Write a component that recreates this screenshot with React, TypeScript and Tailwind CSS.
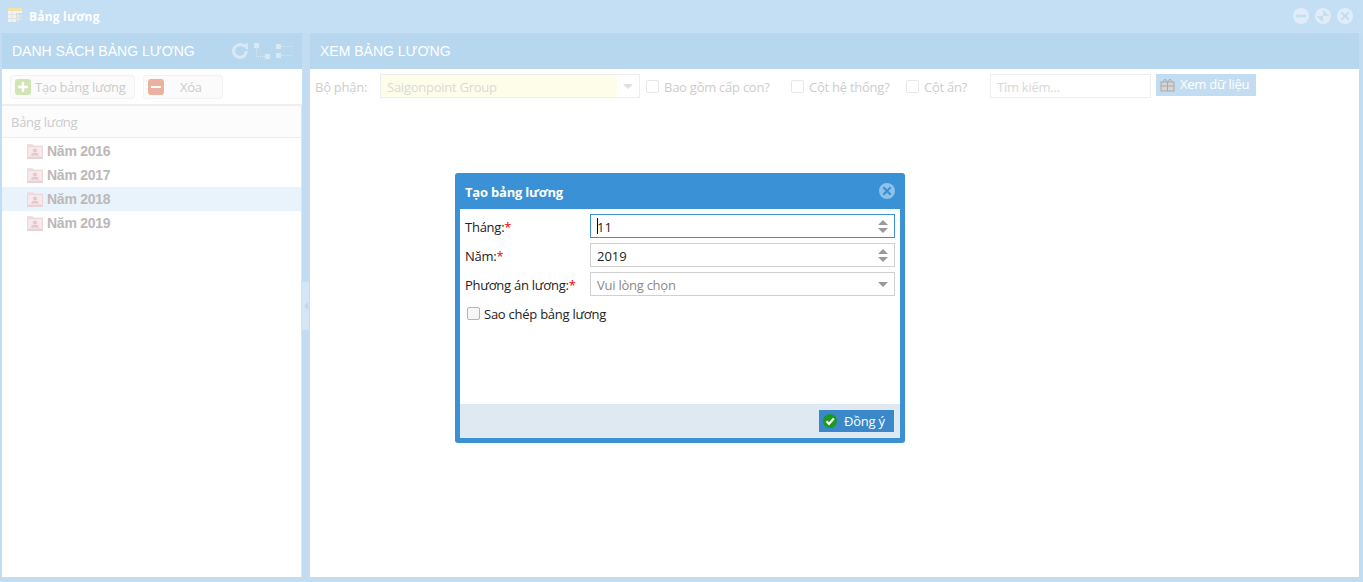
import React from "react";

const Tri = ({ up = false, color = "#9a9a9a" }: { up?: boolean; color?: string }) => (
  <svg width="10" height="5" viewBox="0 0 10 5" className="block">
    <polygon points={up ? "5,0 10,5 0,5" : "0,0 10,0 5,5"} fill={color} />
  </svg>
);

const Check = ({ className = "" }: { className?: string }) => (
  <span className={`block w-[13px] h-[13px] rounded-[2px] border border-[#e8e8e8] bg-white ${className}`} />
);

const FolderIcon = () => (
  <svg width="16" height="15" viewBox="0 0 16 15" className="shrink-0">
    <path d="M0 3 L0 1 Q0 0 1 0 L5.5 0 L7 1.5 L15 1.5 Q16 1.5 16 2.5 L16 3 Z" fill="#efdfe2" />
    <rect x="0" y="2.5" width="16" height="11" fill="#f7e9ea" />
    <rect x="0.5" y="2.5" width="15" height="10.5" fill="none" stroke="#ecd8dc" />
    <circle cx="8" cy="6.5" r="2.1" fill="#e3c9cd" />
    <path d="M3.5 11.5 L12.5 11.5 L10.5 9 L5.5 9 Z" fill="#e3c9cd" />
    <rect x="0" y="13" width="16" height="2" fill="#e6d3d6" />
  </svg>
);

const WinBtn = ({ kind }: { kind: "min" | "max" | "close" }) => (
  <svg width="16" height="16" viewBox="0 0 16 16">
    <circle cx="8" cy="8" r="8" fill="#e0edf8" />
    {kind === "min" && <rect x="3" y="6.6" width="10" height="2.8" fill="#c4def2" />}
    {kind === "max" && <path d="M8 8 L8 1.5 L14.5 8 Z M8 8 L8 14.5 L1.5 8 Z" fill="#c4def2" />}
    {kind === "close" && <path d="M4.2 4.2 L11.8 11.8 M11.8 4.2 L4.2 11.8" stroke="#c4def2" strokeWidth="2.2" />}
  </svg>
);

const Field = ({ label, children }: { label: string; children: React.ReactNode }) => (
  <div className="flex items-center h-[24px]">
    <div className="w-[125px] pt-[4px] text-[13px] tracking-[-0.25px] text-[#222]">
      {label}:<span className="text-[#f00000]">*</span>
    </div>
    {children}
  </div>
);

const Spin = () => (
  <div className="flex flex-col gap-[3px] mr-[6px]">
    <Tri up />
    <Tri />
  </div>
);

const years = ["Năm 2016", "Năm 2017", "Năm 2018", "Năm 2019"];

export default function App() {
  return (
    <div className="relative w-[1363px] h-[582px] overflow-hidden flex flex-col bg-[#c2ddf2] font-['Open_Sans','Noto_Sans',sans-serif]">
      {/* Window title */}
      <div className="h-[33px] shrink-0 flex items-center pl-[8px] pr-[10px] bg-[#c4def3]">
        <svg width="14" height="14" viewBox="0 0 14 14" className="mb-[3px]">
          <rect x="0" y="0" width="14" height="14" fill="#f2f3f0" />
          <rect x="0" y="0" width="14" height="3" fill="#f3e3a9" />
          <path d="M4 3 V14 M0 6.5 H8 M0 10.5 H8" stroke="#dfe3e3" />
          <rect x="8" y="5" width="6" height="9" fill="#d3d9dd" />
          <path d="M10 5 V14 M8 8 H14 M8 11 H14" stroke="#e8ecee" />
        </svg>
        <span className="ml-[7px] text-[12px] tracking-[0.2px] font-bold text-white">Bảng lương</span>
        <div className="ml-auto flex gap-[6px] mb-[2px]">
          <WinBtn kind="min" />
          <WinBtn kind="max" />
          <WinBtn kind="close" />
        </div>
      </div>

      {/* Panels */}
      <div className="flex-1 flex pl-[2px] pr-[4px] pb-[5px] min-h-0">
        {/* Left */}
        <div className="w-[300px] shrink-0 flex flex-col">
          <div className="h-[36px] shrink-0 flex items-center pl-[10px] pr-[10px] bg-[#b7d7ef]">
            <span className="text-[14px] text-white font-['Liberation_Sans',sans-serif]">DANH SÁCH BẢNG LƯƠNG</span>
            <div className="ml-auto flex items-center gap-[6px]">
              <svg width="16" height="16" viewBox="0 0 16 16" fill="none">
                <path d="M14.4 8 A6.4 6.4 0 1 1 11.8 2.9" stroke="#d8e9f6" strokeWidth="3" />
                <path d="M9 2 L15.8 0 V7 Z" fill="#d8e9f6" />
              </svg>
              <svg width="16" height="16" viewBox="0 0 16 16">
                <rect x="0" y="0" width="5" height="5" fill="#d8e9f6" />
                <rect x="11" y="11" width="5" height="5" fill="#d8e9f6" />
                <path d="M2.5 5 V13.5 H11" stroke="#d8e9f6" strokeDasharray="1 1" fill="none" />
              </svg>
              <svg width="16" height="16" viewBox="0 0 16 16">
                <rect x="0" y="1" width="5" height="5" fill="#d8e9f6" />
                <rect x="0" y="10" width="5" height="5" fill="#d8e9f6" />
                <path d="M5 3.5 H16 M5 12.5 H16" stroke="#d8e9f6" strokeDasharray="1 1" />
              </svg>
            </div>
          </div>
          <div className="flex-1 bg-white flex flex-col min-h-0">
            <div className="h-[37px] shrink-0 flex items-center gap-[8px] pl-[8px] border-b-2 border-[#eeeeee]">
              <div className="w-[125px] h-[24px] flex items-center pl-[4px] rounded-[3px] border border-[#f3f3f3] bg-[#fbfbfb]">
                <span className="w-[16px] h-[16px] rounded-[3px] bg-[#cfe6b4] flex items-center justify-center">
                  <svg width="10" height="10" viewBox="0 0 10 10"><path d="M5 0 V10 M0 5 H10" stroke="#fff" strokeWidth="2.4" /></svg>
                </span>
                <span className="ml-[4px] pt-[2px] text-[13px] tracking-[-0.25px] text-[#cbcbcb]">Tạo bảng lương</span>
              </div>
              <div className="w-[80px] h-[24px] flex items-center pl-[4px] rounded-[3px] border border-[#f3f3f3] bg-[#fbfbfb]">
                <span className="w-[16px] h-[16px] rounded-[3px] bg-[#edb09f] flex items-center justify-center">
                  <span className="block w-[10px] h-[2px] bg-white" />
                </span>
                <span className="ml-[16px] pt-[2px] text-[13px] tracking-[-0.25px] text-[#cbcbcb]">Xóa</span>
              </div>
            </div>
            <div className="flex-1 flex flex-col min-h-0 border-r border-[#d5e6f4]">
              <div className="h-[32px] shrink-0 flex items-center pl-[9px] pt-[2px] bg-[#fcfcfc] border-b border-[#eeeeee] text-[13px] tracking-[-0.25px] text-[#cbcbcb]">
                Bảng lương
              </div>
              <div className="pt-[1px]">
                {years.map((y, i) => (
                  <div key={y} className={`h-[24px] flex items-center pl-[25px] gap-[4px] ${i === 2 ? "bg-[#e9f3fb]" : ""}`}>
                    <FolderIcon />
                    <span className="text-[14px] tracking-[-0.25px] font-bold text-[#bdb8b8] font-['Liberation_Sans',sans-serif]">{y}</span>
                  </div>
                ))}
              </div>
            </div>
          </div>
        </div>

        {/* Splitter */}
        <div className="w-[8px] shrink-0 flex items-center">
          <div className="w-[7px] h-[48px] mt-[2px] bg-[#d2e6f6] flex items-center justify-center">
            <svg width="4" height="8" viewBox="0 0 4 8"><polygon points="4,0 4,8 0,4" fill="#bcd8ee" /></svg>
          </div>
        </div>

        {/* Right */}
        <div className="flex-1 flex flex-col min-w-0">
          <div className="h-[36px] shrink-0 flex items-center pl-[10px] bg-[#b7d7ef]">
            <span className="text-[14px] text-white font-['Liberation_Sans',sans-serif]">XEM BẢNG LƯƠNG</span>
          </div>
          <div className="flex-1 bg-white">
            <div className="flex items-start pt-[5px] pl-[5px] text-[13px] tracking-[-0.25px] text-[#cdcdcd]">
              <span className="w-[65px] h-[24px] leading-[26px]">Bộ phận:</span>
              <div className="w-[260px] h-[24px] flex border border-[#eeeeee]">
                <div className="w-[236px] bg-[#fdfde9] pl-[6px] leading-[24px] text-[#dadada]">Saigonpoint Group</div>
                <div className="flex-1 flex items-center justify-center"><Tri color="#e0e0e0" /></div>
              </div>
              <Check className="ml-[6px] mt-[6px]" />
              <span className="ml-[5px] w-[127px] h-[24px] leading-[26px]">Bao gồm cấp con?</span>
              <Check className="mt-[6px]" />
              <span className="ml-[5px] w-[97px] h-[24px] leading-[26px]">Cột hệ thống?</span>
              <Check className="mt-[6px]" />
              <span className="ml-[5px] w-[66px] h-[24px] leading-[26px]">Cột ẩn?</span>
              <div className="w-[161px] h-[24px] border border-[#eeeeee] pl-[6px] leading-[25px] text-[#d8d8d8]">Tìm kiếm...</div>
              <div className="ml-[5px] w-[100px] h-[22px] bg-[#c2ddf2] flex items-center pl-[4px] text-white">
                <svg width="15" height="14" viewBox="0 0 15 14">
                  <rect x="1" y="4" width="13" height="9" fill="#d5d5d5" stroke="#a9a9a9" />
                  <path d="M7.5 4 V13 M1 8 H14" stroke="#a9a9a9" />
                  <path d="M3 4 L5 1 L7.5 4 L10 1 L12 4" stroke="#a9a9a9" fill="none" />
                </svg>
                <span className="ml-[5px]">Xem dữ liệu</span>
              </div>
            </div>
          </div>
        </div>
      </div>

      {/* Dialog */}
      <div className="absolute left-[455px] top-[173px] w-[450px] h-[270px] rounded-[3px] bg-[#3a91d5] px-[5px] pb-[5px] flex flex-col">
        <div className="h-[36px] shrink-0 flex items-center justify-between pl-[5px] pr-[5px]">
          <span className="pt-[3px] text-[13px] tracking-[-0.2px] font-bold text-white">Tạo bảng lương</span>
          <svg width="16" height="16" viewBox="0 0 16 16">
            <circle cx="8" cy="8" r="8" fill="#8ec2ea" />
            <path d="M4.3 4.3 L11.7 11.7 M11.7 4.3 L4.3 11.7" stroke="#3a8fd5" strokeWidth="2.2" />
          </svg>
        </div>
        <div className="flex-1 bg-white flex flex-col min-h-0">
          <div className="flex-1 flex flex-col pt-[5px] pl-[5px] pr-[5px] gap-[5px]">
            <Field label="Tháng">
              <div className="flex-1 h-[24px] flex items-center border border-[#3a91d5] pl-[6px]">
                <span className="w-[1px] h-[16px] bg-black" />
                <span className="pt-[4px] text-[13px] text-[#222] ml-[-1px]">11</span>
                <div className="ml-auto"><Spin /></div>
              </div>
            </Field>
            <Field label="Năm">
              <div className="flex-1 h-[24px] flex items-center border border-[#d0d0d0] pl-[6px]">
                <span className="pt-[4px] text-[13px] text-[#222]">2019</span>
                <div className="ml-auto"><Spin /></div>
              </div>
            </Field>
            <Field label="Phương án lương">
              <div className="flex-1 h-[24px] flex items-center border border-[#d0d0d0] pl-[6px]">
                <span className="pt-[4px] text-[13px] tracking-[-0.25px] text-[#8a8a8a]">Vui lòng chọn</span>
                <div className="ml-auto mr-[6px]"><Tri /></div>
              </div>
            </Field>
            <div className="flex items-center h-[24px] pl-[2px]">
              <span className="block w-[13px] h-[13px] rounded-[2px] border border-[#b5b5b5] bg-[#f6f6f6]" />
              <span className="ml-[4px] pt-[4px] text-[13px] tracking-[-0.25px] text-[#222]">Sao chép bảng lương</span>
            </div>
          </div>
          <div className="h-[34px] shrink-0 bg-[#dfe9f2] flex items-center justify-end pr-[6px]">
            <div className="w-[75px] h-[22px] bg-[#3a87c9] flex items-center pl-[4px]">
              <svg width="14" height="14" viewBox="0 0 14 14">
                <circle cx="7" cy="7" r="7" fill="#1c9a1c" />
                <path d="M3.5 7.2 L6 9.8 L10.8 4.6" stroke="#fff" strokeWidth="2.2" fill="none" />
              </svg>
              <span className="ml-[7px] pt-[2px] text-[13px] tracking-[-0.25px] text-white">Đồng ý</span>
            </div>
          </div>
        </div>
      </div>
    </div>
  );
}
